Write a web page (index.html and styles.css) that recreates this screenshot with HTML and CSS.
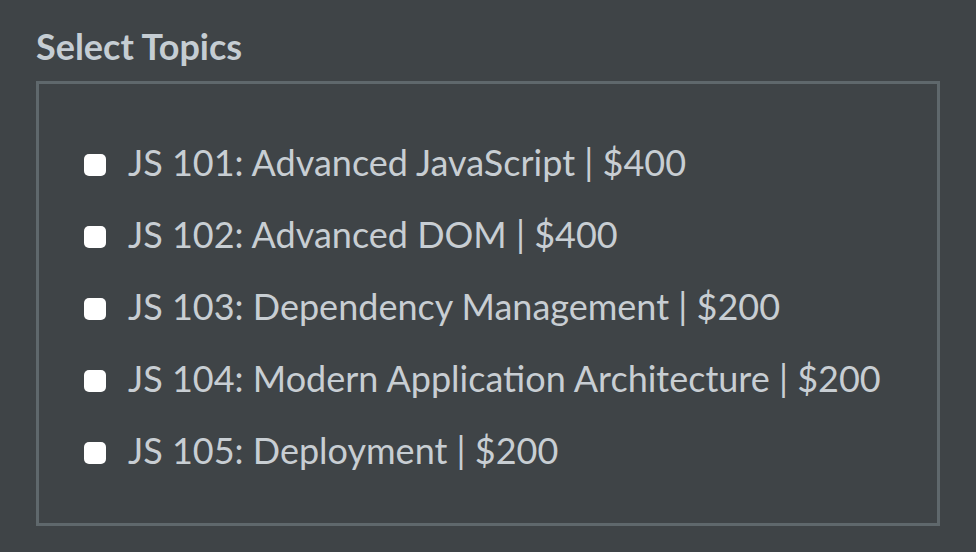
FILE: index.html
```html
<!DOCTYPE html>
<html>
<head>
<meta charset="utf-8">
<link rel="stylesheet" href="styles.css">
</head>
<body>
<div class="page">
  <h2 class="title">Select Topics</h2>
  <div class="box">
    <label class="row"><span class="check"></span><span>JS 101: Advanced JavaScript | $400</span></label>
    <label class="row"><span class="check"></span><span>JS 102: Advanced DOM | $400</span></label>
    <label class="row"><span class="check"></span><span>JS 103: Dependency Management | $200</span></label>
    <label class="row"><span class="check"></span><span>JS 104: Modern Application Architecture | $200</span></label>
    <label class="row"><span class="check"></span><span>JS 105: Deployment | $200</span></label>
  </div>
</div>
</body>
</html>
```
FILE: styles.css
```css
html, body {
  margin: 0;
  padding: 0;
  background: #3f4447;
  height: 100%;
}
.page {
  padding: 25px 36px 0 36px;
  font-family: Lato, "Open Sans", sans-serif;
  color: #c8ced3;
}
.title {
  margin: 0 0 14px 0;
  font-size: 36px;
  font-weight: 700;
  line-height: 42px;
  color: #c5cdd3;
}
.box {
  width: 904px;
  box-sizing: border-box;
  border: 3px solid #5f686c;
  padding: 42px 0 37px 45px;
  display: flex;
  flex-direction: column;
}
.row {
  display: flex;
  align-items: center;
  height: 72px;
  font-size: 36px;
}
.check {
  width: 22px;
  height: 22px;
  background: #ffffff;
  border-radius: 5px;
  margin-right: 22px;
  margin-top: 6px;
  flex: none;
}
```
